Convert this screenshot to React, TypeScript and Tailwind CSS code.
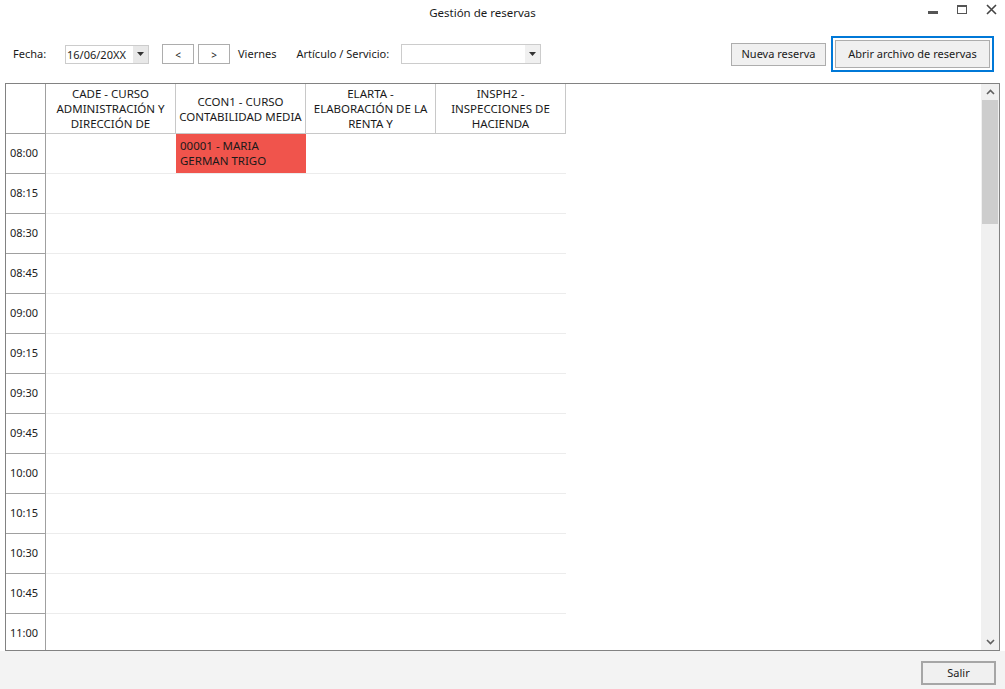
import React from "react";

const columns = [
  ["CADE - CURSO", "ADMINISTRACIÓN Y", "DIRECCIÓN DE"],
  ["CCON1 - CURSO", "CONTABILIDAD MEDIA"],
  ["ELARTA -", "ELABORACIÓN DE LA", "RENTA Y"],
  ["INSPH2 -", "INSPECCIONES DE", "HACIENDA"],
];

const times = ["08:00", "08:15", "08:30", "08:45", "09:00", "09:15", "09:30", "09:45", "10:00", "10:15", "10:30", "10:45", "11:00"];

function Caret() {
  return (
    <svg width="7" height="4" viewBox="0 0 7 4">
      <path d="M0 0h7L3.5 4z" fill="#333" />
    </svg>
  );
}

function Chevron({ up }: { up?: boolean }) {
  return (
    <svg width="9" height="6" viewBox="0 0 9 6">
      <path d={up ? "M1 5l3.5-3.5L8 5" : "M1 1l3.5 3.5L8 1"} stroke="#606060" strokeWidth="1.6" fill="none" />
    </svg>
  );
}

export default function App() {
  return (
    <div
      className="w-[1005px] h-[689px] bg-white flex flex-col text-[11px] text-[#1a1a1a] overflow-hidden"
      style={{ fontFamily: '"Noto Sans", "Segoe UI", sans-serif' }}
    >
      {/* Title bar */}
      <div className="relative h-[30px] flex items-center justify-center">
        <span className="mt-[-4px] mr-[40px] text-[11.5px]">Gestión de reservas</span>
        <div className="absolute right-[8px] top-[4px] flex items-center gap-[19px]">
          <div className="w-[10px] h-[3px] bg-[#555] mt-[5px]" />
          <div className="w-[10px] h-[9px] border border-[#555] border-t-[2px]" />
          <svg width="11" height="11" viewBox="0 0 11 11">
            <path d="M1 1l9 9M10 1l-9 9" stroke="#444" strokeWidth="1.6" />
          </svg>
        </div>
      </div>

      {/* Toolbar */}
      <div className="mt-[6px] h-[36px] flex items-center">
        <span className="ml-[13px] w-[52px] pt-[1px]">Fecha:</span>
        <div className="w-[84px] h-[19px] border border-[#cccccc] flex items-center">
          <span className="flex-1 pl-[1px] text-[11px] leading-none">16/06/20XX</span>
          <div className="w-[15px] h-full bg-[#e8e8e8] flex items-center justify-center">
            <Caret />
          </div>
        </div>
        <button className="ml-[13px] w-[32px] h-[20px] border border-[#adadad] bg-white text-[10px] pt-[2px]">&lt;</button>
        <button className="ml-[4px] w-[32px] h-[20px] border border-[#adadad] bg-white text-[10px] pt-[2px]">&gt;</button>
        <span className="ml-[8px] pt-[1px]">Viernes</span>
        <span className="ml-[20px] pt-[1px]">Artículo / Servicio:</span>
        <div className="ml-[12px] w-[140px] h-[20px] border border-[#cccccc] flex">
          <div className="flex-1" />
          <div className="w-[15px] h-full bg-[#f0f0f0] flex items-center justify-center">
            <Caret />
          </div>
        </div>
        <div className="flex-1" />
        <button className="w-[95px] h-[23px] border border-[#adadad] bg-[#f0f0f0] pt-[1px]">Nueva reserva</button>
        <div className="ml-[5px] mr-[11px] w-[163px] h-[36px] border-2 border-[#0078d7] p-[2px]">
          <button className="w-full h-full border border-[#adadad] bg-[#f0f0f0] pt-[1px]">Abrir archivo de reservas</button>
        </div>
      </div>

      {/* Grid */}
      <div className="mt-[11px] mx-[5px] h-[568px] border border-[#828282] flex">
        <div className="flex-1 overflow-hidden">
          <div className="flex h-[50px]">
            <div className="w-[40px] border-r border-b border-[#a0a0a0]" />
            {columns.map((lines, i) => (
              <div
                key={i}
                className="w-[130px] border-r border-b border-[#c8c8c8] flex flex-col items-center justify-center leading-[15px] text-[11.5px] text-center overflow-hidden"
              >
                {lines.map((l) => (
                  <span key={l}>{l}</span>
                ))}
              </div>
            ))}
          </div>
          {times.map((t, r) => (
            <div key={t} className="flex h-[40px]">
              <div className="w-[40px] border-r border-b border-[#a0a0a0] flex items-center pl-[4px]">{t}</div>
              {columns.map((_, c) =>
                r === 0 && c === 1 ? (
                  <div key={c} className="w-[130px] bg-[#f0544c] border-b border-[#ececec] pl-[4px] pt-[4px] leading-[15px] text-[11.5px]">
                    00001 - MARIA
                    <br />
                    GERMAN TRIGO
                  </div>
                ) : (
                  <div key={c} className="w-[130px] border-b border-[#ececec]" />
                )
              )}
            </div>
          ))}
        </div>
        {/* Scrollbar */}
        <div className="w-[18px] bg-[#f0f0f0] flex flex-col">
          <div className="h-[16px] flex items-center justify-center">
            <Chevron up />
          </div>
          <div className="mx-[1px] h-[124px] bg-[#cdcdcd]" />
          <div className="flex-1" />
          <div className="h-[16px] flex items-center justify-center">
            <Chevron />
          </div>
        </div>
      </div>

      {/* Footer */}
      <div className="flex-1 bg-[#f3f3f3] flex justify-end items-start">
        <button className="mt-[10px] mr-[9px] w-[75px] h-[24px] border-2 border-[#a6a6a6] bg-[#f0f0f0]">Salir</button>
      </div>
    </div>
  );
}
